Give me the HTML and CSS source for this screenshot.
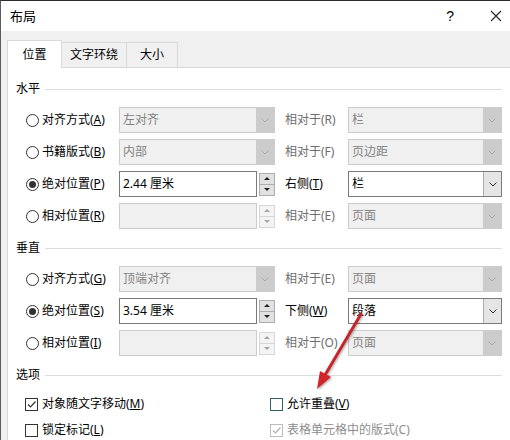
FILE: index.html
```html
<!DOCTYPE html>
<html lang="zh-CN">
<head>
    <meta charset="UTF-8">
    <title>布局</title>
    <link rel="stylesheet" href="styles.css">
</head>
<body>
<div class="dialog">

    <div class="titlebar">
        <span class="title">布局</span>
        <span class="help">?</span>
        <svg class="close" width="12" height="12" viewBox="0 0 12 12">
            <path d="M1 1 L11 11 M11 1 L1 11" stroke="#222" stroke-width="1.1" fill="none"/>
        </svg>
    </div>

    <div class="tabs">
        <div class="tab active w1">位置</div>
        <div class="tab w2">文字环绕</div>
        <div class="tab w3">大小</div>
    </div>

    <div class="page">
        <!-- 水平 -->
        <div class="group"><span>水平</span><i class="rule"></i></div>
        <div class="rows">
            <div class="row">
                <label class="opt"><span class="radio"></span><span>对齐方式(<u>A</u>)</span></label>
                <div class="combo off"><span>左对齐</span><i class="drop"><svg width="8" height="5" viewBox="0 0 8 5"><path d="M0.5 0.5 L4 4 L7.5 0.5" fill="none"/></svg></i></div>
                <span class="rel off">相对于(R)</span>
                <div class="combo off"><span>栏</span><i class="drop"><svg width="8" height="5" viewBox="0 0 8 5"><path d="M0.5 0.5 L4 4 L7.5 0.5" fill="none"/></svg></i></div>
            </div>
            <div class="row">
                <label class="opt"><span class="radio"></span><span>书籍版式(<u>B</u>)</span></label>
                <div class="combo off"><span>内部</span><i class="drop"><svg width="8" height="5" viewBox="0 0 8 5"><path d="M0.5 0.5 L4 4 L7.5 0.5" fill="none"/></svg></i></div>
                <span class="rel off">相对于(F)</span>
                <div class="combo off"><span>页边距</span><i class="drop"><svg width="8" height="5" viewBox="0 0 8 5"><path d="M0.5 0.5 L4 4 L7.5 0.5" fill="none"/></svg></i></div>
            </div>
            <div class="row">
                <label class="opt"><span class="radio on"></span><span>绝对位置(<u>P</u>)</span></label>
                <div class="spin">
                    <div class="field">2.44 厘米</div>
                    <div class="arrows"><b class="up"></b><b class="down"></b></div>
                </div>
                <span class="rel">右侧(<u>T</u>)</span>
                <div class="combo"><span>栏</span><i class="drop"><svg width="8" height="5" viewBox="0 0 8 5"><path d="M0.5 0.5 L4 4 L7.5 0.5" fill="none"/></svg></i></div>
            </div>
            <div class="row">
                <label class="opt"><span class="radio"></span><span>相对位置(<u>R</u>)</span></label>
                <div class="spin off">
                    <div class="field"></div>
                    <div class="arrows"><b class="up"></b><b class="down"></b></div>
                </div>
                <span class="rel off">相对于(E)</span>
                <div class="combo off"><span>页面</span><i class="drop"><svg width="8" height="5" viewBox="0 0 8 5"><path d="M0.5 0.5 L4 4 L7.5 0.5" fill="none"/></svg></i></div>
            </div>
        </div>

        <!-- 垂直 -->
        <div class="group"><span>垂直</span><i class="rule"></i></div>
        <div class="rows">
            <div class="row">
                <label class="opt"><span class="radio"></span><span>对齐方式(<u>G</u>)</span></label>
                <div class="combo off"><span>顶端对齐</span><i class="drop"><svg width="8" height="5" viewBox="0 0 8 5"><path d="M0.5 0.5 L4 4 L7.5 0.5" fill="none"/></svg></i></div>
                <span class="rel off">相对于(E)</span>
                <div class="combo off"><span>页面</span><i class="drop"><svg width="8" height="5" viewBox="0 0 8 5"><path d="M0.5 0.5 L4 4 L7.5 0.5" fill="none"/></svg></i></div>
            </div>
            <div class="row">
                <label class="opt"><span class="radio on"></span><span>绝对位置(<u>S</u>)</span></label>
                <div class="spin">
                    <div class="field">3.54 厘米</div>
                    <div class="arrows"><b class="up"></b><b class="down"></b></div>
                </div>
                <span class="rel">下侧(<u>W</u>)</span>
                <div class="combo"><span>段落</span><i class="drop"><svg width="8" height="5" viewBox="0 0 8 5"><path d="M0.5 0.5 L4 4 L7.5 0.5" fill="none"/></svg></i></div>
            </div>
            <div class="row">
                <label class="opt"><span class="radio"></span><span>相对位置(<u>I</u>)</span></label>
                <div class="spin off">
                    <div class="field"></div>
                    <div class="arrows"><b class="up"></b><b class="down"></b></div>
                </div>
                <span class="rel off">相对于(O)</span>
                <div class="combo off"><span>页面</span><i class="drop"><svg width="8" height="5" viewBox="0 0 8 5"><path d="M0.5 0.5 L4 4 L7.5 0.5" fill="none"/></svg></i></div>
            </div>
        </div>

        <!-- 选项 -->
        <div class="group"><span>选项</span><i class="rule"></i></div>
        <div class="checks">
            <label class="chk"><span class="box"><svg width="11" height="11" viewBox="0 0 11 11"><path d="M2 5.5 L4.5 8 L9.5 2.5" fill="none"/></svg></span><span>对象随文字移动(<u>M</u>)</span></label>
            <label class="chk"><span class="box focus"></span><span>允许重叠(<u>V</u>)</span></label>
            <label class="chk"><span class="box"></span><span>锁定标记(<u>L</u>)</span></label>
            <label class="chk off"><span class="box"><svg width="11" height="11" viewBox="0 0 11 11"><path d="M2 5.5 L4.5 8 L9.5 2.5" fill="none"/></svg></span><span>表格单元格中的版式(C)</span></label>
        </div>
    </div>

    <!-- red pointer drawn over the form -->
    <svg class="pointer" width="510" height="440" viewBox="0 0 510 440">
        <defs>
            <filter id="shade" x="-20%" y="-20%" width="140%" height="140%">
                <feDropShadow dx="1" dy="1" stdDeviation="1" flood-color="#000" flood-opacity="0.35"/>
            </filter>
        </defs>
        <g filter="url(#shade)">
            <line x1="361" y1="314" x2="325" y2="375" stroke="#c4262b" stroke-width="3" stroke-linecap="round"/>
            <polygon points="317,389 331,377 320,371" fill="#d0282d"/>
        </g>
    </svg>
</div>
</body>
</html>
```

FILE: styles.css
```css
body {
    margin: 0;
    padding: 0;
    background: #fff;
    font-family: "Noto Sans", "Noto Sans CJK SC", sans-serif;
    font-size: 12px;
    line-height: 16px;
    color: #000;
}

.dialog {
    position: relative;
    width: 510px;
    height: 440px;
    overflow: hidden;
    box-sizing: border-box;
    border-top: 1px solid #2b2b2b;
    border-left: 1px solid #5c5c5c;
    background: #f0f0f0;
}

/* title bar */
.titlebar {
    height: 30px;
    background: #fff;
    display: flex;
    align-items: center;
    padding-left: 9px;
}
.title {
    font-size: 13px;
}
.help {
    margin-left: auto;
    font-family: "Liberation Sans", sans-serif;
    font-size: 14px;
    margin-right: 36px;
}
.close {
    margin-right: 8px;
}

/* tabs */
.tabs {
    height: 36px;
    box-sizing: border-box;
    padding: 9px 0 0 6px;
    display: flex;
    align-items: flex-end;
}
.tab {
    height: 25px;
    box-sizing: border-box;
    border: 1px solid #d9d9d9;
    border-bottom: 0;
    background: #f0f0f0;
    text-align: center;
    line-height: 24px;
    margin-left: -1px;
}
.tab.active {
    height: 28px;
    background: #fff;
    margin-bottom: -1px;
    position: relative;
    z-index: 1;
    line-height: 28px;
}
.w1 { width: 55px; margin-left: 0; }
.w2 { width: 66px; }
.w3 { width: 52px; }

/* page */
.page {
    width: 520px;
    height: 400px;
    margin-left: 6px;
    box-sizing: border-box;
    background: #fff;
    border: 1px solid #d9d9d9;
    padding: 13px 0 0 8px;
}

.group {
    width: 486px;
    display: flex;
    align-items: center;
    height: 16px;
}
.group .rule {
    flex: 1;
    height: 1px;
    background: #dcdcdc;
    margin-left: 5px;
}

.rows {
    margin: 10px 0 11px 8px;
    display: grid;
    row-gap: 6px;
}
.row {
    display: grid;
    grid-template-columns: 95px 156px 73px 154px;
    align-items: center;
    height: 26px;
}

.opt {
    display: flex;
    align-items: center;
    gap: 3px;
}
.radio {
    width: 13px;
    height: 13px;
    box-sizing: border-box;
    border: 1px solid #333;
    border-radius: 50%;
    margin-left: 2px;
    display: flex;
    align-items: center;
    justify-content: center;
}
.radio.on::after {
    content: "";
    width: 7px;
    height: 7px;
    border-radius: 50%;
    background: #333;
}

.rel {
    padding-left: 10px;
}
.rel.off {
    color: #6d6d6d;
}

/* combo box */
.combo {
    height: 26px;
    box-sizing: border-box;
    border: 1px solid #7a7a7a;
    background: #fff;
    display: flex;
    align-items: stretch;
}
.combo span {
    flex: 1;
    padding-left: 3px;
    line-height: 24px;
}
.combo .drop {
    width: 17px;
    background: #e5e5e5;
    border-left: 1px solid #adadad;
    display: flex;
    align-items: center;
    justify-content: center;
}
.combo .drop path {
    stroke: #333;
    stroke-width: 1;
}
.combo.off {
    border-color: #cccccc;
    background: #f0f0f0;
    color: #838383;
}
.combo.off .drop {
    width: 18px;
    background: #cccccc;
    border-left: 0;
}
.combo.off .drop path {
    stroke: #aaaaaa;
}

/* spin field */
.spin {
    display: flex;
    align-items: center;
    gap: 2px;
    height: 26px;
}
.spin .field {
    width: 138px;
    height: 26px;
    box-sizing: border-box;
    border: 1px solid #7a7a7a;
    background: #fff;
    padding-left: 3px;
    line-height: 24px;
}
.spin .arrows {
    width: 16px;
    height: 23px;
    box-sizing: border-box;
    border: 1px solid #adadad;
    background: #e1e1e1;
    display: flex;
    flex-direction: column;
}
.spin .arrows b {
    flex: 1;
    display: flex;
    align-items: center;
    justify-content: center;
}
.spin .arrows .down {
    border-top: 1px solid #adadad;
}
.spin .arrows .up::after {
    content: "";
    border-left: 3px solid transparent;
    border-right: 3px solid transparent;
    border-bottom: 3px solid #222;
}
.spin .arrows .down::after {
    content: "";
    border-left: 3px solid transparent;
    border-right: 3px solid transparent;
    border-top: 3px solid #222;
}
.spin.off .field {
    border-color: #cccccc;
    background: #f0f0f0;
}
.spin.off .arrows {
    border-color: #d6d6d6;
    background: #f4f4f4;
}
.spin.off .arrows .down {
    border-top-color: #d6d6d6;
}
.spin.off .arrows .up::after {
    border-bottom-color: #a6a6a6;
}
.spin.off .arrows .down::after {
    border-top-color: #a6a6a6;
}

/* options */
.checks {
    margin: 11px 0 0 8px;
    display: grid;
    grid-template-columns: 245px 1fr;
    row-gap: 6px;
}
.chk {
    display: flex;
    align-items: center;
    gap: 4px;
    height: 20px;
}
.box {
    width: 13px;
    height: 13px;
    box-sizing: border-box;
    border: 1px solid #333;
    margin-left: 1px;
    display: flex;
    align-items: center;
    justify-content: center;
}
.box path {
    stroke: #333;
    stroke-width: 1.2;
}
.box.focus {
    border-color: #2f5d6a;
}
.chk.off {
    color: #8d8d8d;
}
.chk.off .box {
    border-color: #bcbcbc;
}
.chk.off .box path {
    stroke: #b0b0b0;
}

.pointer {
    position: absolute;
    left: -1px;
    top: -1px;
    pointer-events: none;
}
```
